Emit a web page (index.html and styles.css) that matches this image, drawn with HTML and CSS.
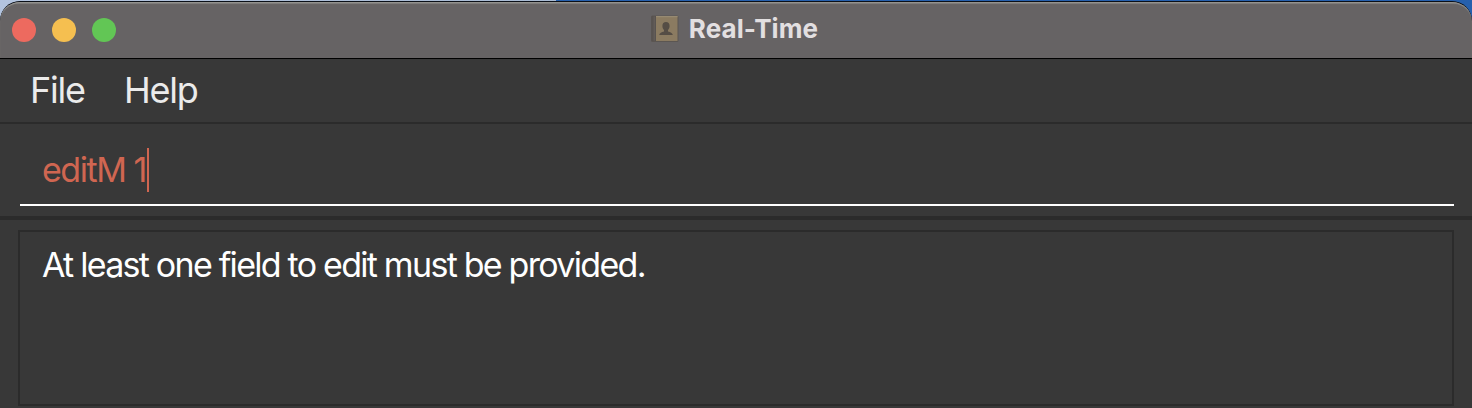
FILE: index.html
```html
<!DOCTYPE html>
<html lang="en">
<head>
<meta charset="utf-8">
<title>Real-Time</title>
<link rel="stylesheet" href="styles.css">
</head>
<body>
<div class="window">
  <header class="titlebar">
    <div class="lights"><i class="light close"></i><i class="light minimize"></i><i class="light zoom"></i></div>
    <div class="caption">
      <svg class="book" width="30" height="28" viewBox="0 0 30 28">
        <rect x="1" y="0.500" width="27.500" height="26.500" rx="1.500" fill="#5b5652"/>
        <rect x="1.500" y="1" width="5" height="25" rx="1" fill="#585350"/>
        <rect x="3.500" y="1.500" width="1.500" height="24" fill="#625c58"/>
        <rect x="6" y="1" width="21.500" height="25" fill="#8b7b61"/>
        <rect x="6" y="1" width="21.500" height="1.200" fill="#978a72"/>
        <path d="M16 7c2.300 0 3.600 1.600 3.600 4 0 1.700-.7 3.200-1.600 4v1.400c2.300.8 4.600 1.200 4.800 3.600H9.200c.2-2.400 2.500-2.800 4.800-3.600V15c-.9-.8-1.600-2.300-1.600-4 0-2.400 1.300-4 3.600-4z" fill="#554d45"/>
      </svg>
      <span class="title">Real-Time</span>
    </div>
  </header>
  <nav class="menubar"><span class="menu file">File</span><span class="menu help">Help</span></nav>
  <section class="command">
    <div class="field"><span class="entry">editM 1</span><i class="caret"></i></div>
  </section>
  <main class="result">
    <div class="panel"><span class="message">At least one field to edit must be provided.</span></div>
  </main>
</div>
</body>
</html>
```
FILE: styles.css
```css
* { box-sizing: border-box; }
body {
  margin: 0;
  height: 408px;
  overflow: hidden;
  padding-top: 1px;
  background: linear-gradient(90deg, #b3c4df 0, #a9bbd3 556px, #2660ad 556px);
  font-family: Inter, "Liberation Sans", sans-serif;
  white-space: nowrap;
}
.window {
  height: 407px;
  border-top: 1px solid #0b1018;
  border-radius: 20px 20px 0 0;
  background: #383838;
  overflow: hidden;
}
.titlebar {
  height: 57px;
  display: grid;
  grid-template-columns: 1fr auto 1fr;
  background: #666364;
  border-bottom: 1px solid #000;
  border-radius: 19px 19px 0 0;
  box-shadow: inset 0 2px 1px -0.5px #969591;
}
.lights { display: flex; gap: 16px; padding: 16px 0 0 12px; }
.light { width: 24px; height: 24px; border-radius: 50%; }
.close { background: #ed6a5f; }
.minimize { background: #f5bf50; }
.zoom { background: #62c655; }
.caption { display: flex; gap: 9px; padding: 13px 4px 0 0; }
.title {
  font-size: 26px;
  font-weight: 700;
  line-height: 28px;
  letter-spacing: 0.1px;
  color: #e2dfe0;
}
.menubar {
  height: 65px;
  display: flex;
  gap: 39px;
  padding: 9px 0 0 30px;
  border-bottom: 2px solid #2b2b2b;
  color: #ebebeb;
  font-size: 36px;
  line-height: 44px;
}
.command {
  height: 96px;
  padding: 0 18px 0 20px;
  border-bottom: 4px solid #2b2b2b;
}
.field {
  height: 82px;
  display: flex;
  padding: 24px 0 0 22px;
  border-bottom: 2px solid #fff;
  color: #d06651;
  font-size: 34px;
  line-height: 44px;
}
.entry { width: 105px; letter-spacing: -1.45px; }
.caret { width: 2px; height: 44px; background: #d06651; }
.result { padding: 10px 18px 0; }
.panel {
  height: 176px;
  padding: 11px 22px;
  border: 2px solid #2b2b2b;
  color: #fff;
  font-size: 34px;
  line-height: 44px;
}
.message { letter-spacing: -1.68px; word-spacing: -0.3px; }
.menu { letter-spacing: -1.2px; }
```
